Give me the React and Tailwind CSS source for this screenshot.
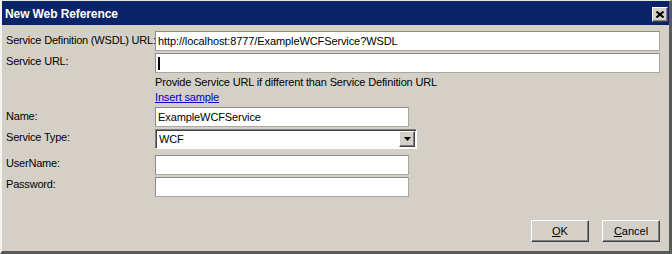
import React from "react";

const font = { fontFamily: '"Liberation Sans", Arial, sans-serif' };

function TextBox({ className = "", children }) {
  return (
    <div
      className={`h-[20px] bg-white border border-t-[#8e8c88] border-l-[#8e8c88] border-r-[#a9a7a2] border-b-[#a9a7a2] flex items-center pl-[2px] text-[11px] tracking-[-0.1px] text-black whitespace-nowrap ${className}`}
    >
      {children}
    </div>
  );
}

function Label({ children, className = "text-black" }) {
  return (
    <div className={`text-[11px] tracking-[-0.2px] leading-[14px] whitespace-nowrap ${className}`}>{children}</div>
  );
}

function Btn({ children }) {
  return (
    <div className="w-[58px] h-[22px] bg-[#d4d0c8] border border-t-white border-l-white border-r-[#404040] border-b-[#404040] shadow-[inset_-1px_-1px_0_#808080] flex items-center justify-center text-[11px] text-black">
      {children}
    </div>
  );
}

export default function App() {
  return (
    <div
      style={font}
      className="w-[672px] h-[254px] bg-[#d4d0c8] border-t border-l-2 border-r-[3px] border-b-[3px] border-t-[#e9e7e3] border-l-[#f4f3f0] border-r-[#5a5a5a] border-b-[#5a5a5a] flex flex-col overflow-hidden"
    >
      {/* Title bar */}
      <div className="h-[24px] bg-[#0a246a] flex items-start justify-between pl-[3px] pr-[1px] shrink-0">
        <span className="text-white font-bold text-[12px] tracking-[-0.1px] leading-[14px] mt-[6px]">New Web Reference</span>
        <div className="w-[16px] h-[15px] mt-[6px] bg-[#d4d0c8] border border-t-white border-l-white border-r-[#404040] border-b-[#404040] shadow-[inset_-1px_-1px_0_#808080] flex items-center justify-center">
          <svg width="8" height="7" viewBox="0 0 8 7">
            <path d="M0.5 0.5 L7.5 6.5 M7.5 0.5 L0.5 6.5" stroke="#000" strokeWidth="2" />
          </svg>
        </div>
      </div>

      {/* Body */}
      <div className="flex flex-col pl-[4px] pr-[9px] pt-[6px]">
        <div className="flex items-start">
          <Label className="w-[149px] pt-[2px] text-black">Service Definition (WSDL) URL:</Label>
          <TextBox className="flex-1">http://localhost:8777/ExampleWCFService?WSDL</TextBox>
        </div>
        <div className="flex items-start mt-[2px]">
          <Label className="w-[149px] pt-[1px] text-black">Service URL:</Label>
          <TextBox className="flex-1">
            <span className="inline-block w-[2px] h-[13px] bg-black" />
          </TextBox>
        </div>
        <div className="flex mt-[2px]">
          <div className="w-[149px]" />
          <div className="flex flex-col">
            <div className="text-[11px] tracking-[-0.15px] leading-[15px] text-black whitespace-nowrap">
              Provide Service URL if different than Service Definition URL
            </div>
            <div className="text-[11px] tracking-[-0.15px] leading-[15px] text-[#0000cc] underline whitespace-nowrap">
              Insert sample
            </div>
          </div>
        </div>
        <div className="flex items-start mt-[2px]">
          <Label className="w-[149px] pt-[2px] text-black">Name:</Label>
          <TextBox className="w-[254px]">ExampleWCFService</TextBox>
        </div>
        <div className="flex items-start mt-[2px]">
          <Label className="w-[149px] pt-[1px] text-black">Service Type:</Label>
          <div className="w-[262px] h-[20px] bg-white border border-t-[#808080] border-l-[#808080] border-r-white border-b-white shadow-[inset_1px_1px_0_#404040] flex items-center justify-between pl-[3px] pr-[1px] text-[11px] tracking-[-0.2px] text-black">
            <span>WCF</span>
            <div className="w-[16px] h-[16px] bg-[#d4d0c8] border border-t-white border-l-white border-r-[#404040] border-b-[#404040] shadow-[inset_-1px_-1px_0_#808080] flex items-center justify-center">
              <svg width="7" height="4" viewBox="0 0 7 4">
                <path d="M0 0 H7 L3.5 4 Z" fill="#000" />
              </svg>
            </div>
          </div>
        </div>
        <div className="flex items-start mt-[6px]">
          <Label className="w-[149px] pt-[1px] text-black">UserName:</Label>
          <TextBox className="w-[254px]" />
        </div>
        <div className="flex items-start mt-[2px]">
          <Label className="w-[149px] text-black">Password:</Label>
          <TextBox className="w-[254px]" />
        </div>
        <div className="flex justify-end gap-[13px] mt-[23px] pr-0">
          <Btn>
            <span><span className="underline">O</span>K</span>
          </Btn>
          <Btn>
            <span><span className="underline">C</span>ancel</span>
          </Btn>
        </div>
      </div>
    </div>
  );
}
